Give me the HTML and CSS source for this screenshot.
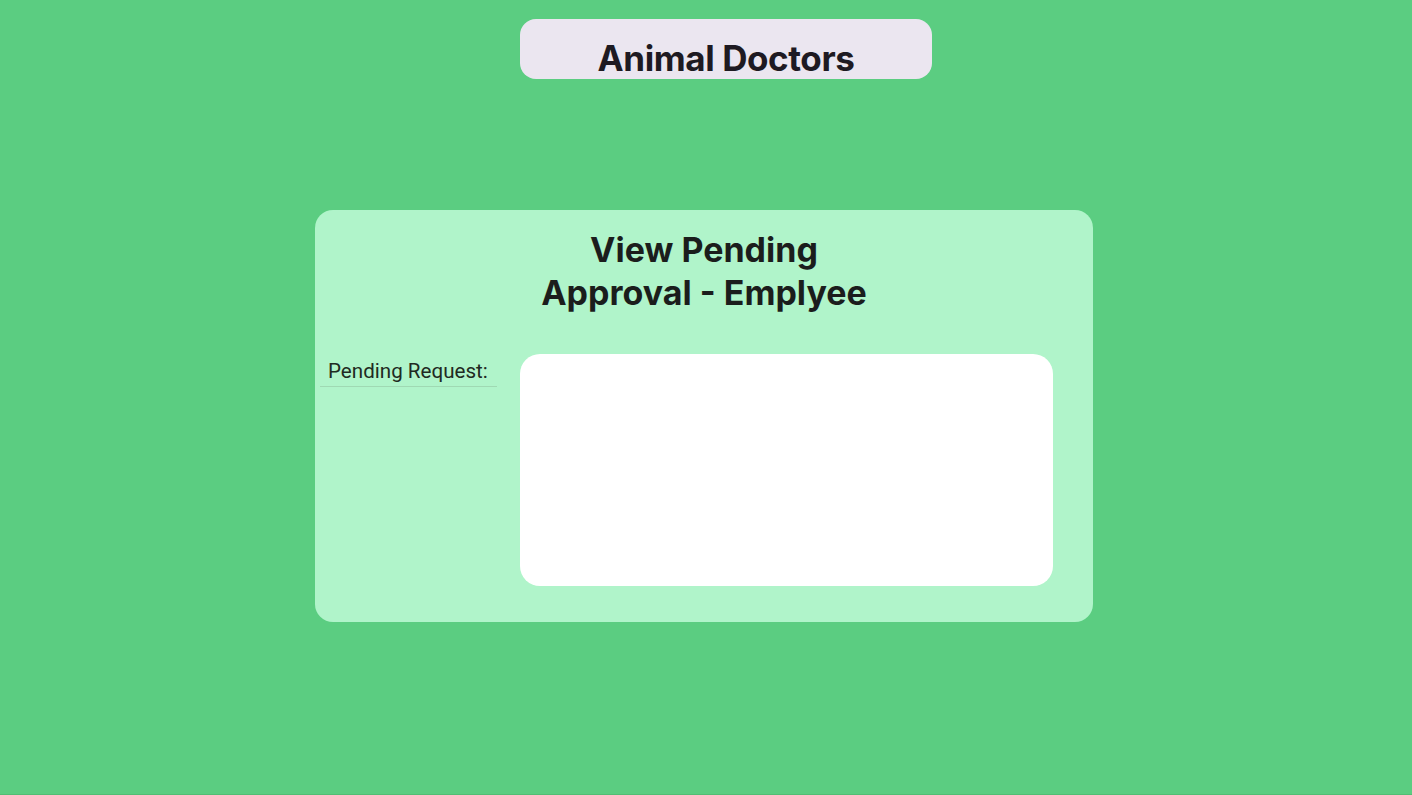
FILE: index.html
```html
<!DOCTYPE html>
<html lang="en">
<head>
<meta charset="utf-8">
<title>Animal Doctors</title>
<link rel="stylesheet" href="styles.css">
</head>
<body>
<div class="page">
  <header class="brand">
    <h1 class="brand-title">Animal Doctors</h1>
  </header>
  <main class="card">
    <h2 class="card-title">View Pending<br>Approval - Emplyee</h2>
    <div class="row">
      <div class="label">Pending Request:</div>
      <div class="list-box"></div>
    </div>
  </main>
</div>
</body>
</html>
```

FILE: styles.css
```css
html, body {
  margin: 0;
  padding: 0;
}
body {
  background: #5bcd81;
  font-family: Inter, "Noto Sans", sans-serif;
}
.page {
  height: 794px;
  border-bottom: 1px solid #52bd74;
  display: flex;
  flex-direction: column;
  overflow: hidden;
}
.brand {
  margin: 19px 0 0 520px;
  width: 412px;
  height: 60px;
  box-sizing: border-box;
  background: #ebe6f0;
  border-radius: 16px;
  display: flex;
  align-items: flex-end;
  justify-content: center;
}
.brand-title {
  margin: 0 0 1px 0;
  font-size: 35px;
  line-height: 40px;
  font-weight: 700;
  color: #1e1a22;
  letter-spacing: -0.4px;
}
.card {
  margin: 131px 0 0 315px;
  width: 778px;
  box-sizing: border-box;
  background: #b0f4ca;
  border-radius: 18px;
  padding: 18px 40px 36px 5px;
  display: flex;
  flex-direction: column;
}
.card-title {
  margin: 0;
  text-align: center;
  font-size: 34px;
  line-height: 43px;
  font-weight: 700;
  color: #1b1d1c;
  letter-spacing: 0;
  padding-left: 35px;
}
.row {
  margin-top: 40px;
  display: flex;
  gap: 23px;
  align-items: flex-start;
}
.label {
  width: 177px;
  box-sizing: border-box;
  padding: 5px 0 3px 8px;
  font-family: Roboto, "Liberation Sans", sans-serif;
  font-size: 20.6px;
  line-height: 24px;
  color: #1f2a22;
  border-bottom: 1px solid #9fd9b3;
}
.list-box {
  width: 533px;
  height: 232px;
  background: #ffffff;
  border-radius: 20px;
}
```
